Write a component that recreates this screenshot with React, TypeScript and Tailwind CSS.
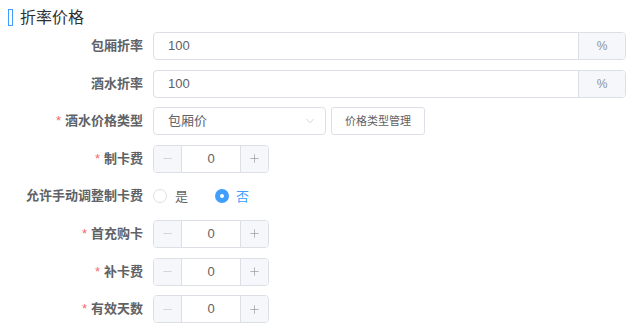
import { ChevronDown, Minus, Plus } from 'lucide-react';

const font = 'font-["Liberation_Sans","Noto_Sans_CJK_SC",sans-serif]';

const Label = ({ text, required }: { text: string; required?: boolean }) => (
    <div className="w-[143px] shrink-0 text-right text-[13px] font-bold text-[#606266] leading-[28px]">
        {required && <span className="text-[#f56c6c] mr-[4px] font-normal">*</span>}
        {text}
    </div>
);

const NumberInput = ({ value }: { value: string }) => (
    <div className="flex h-[28px] w-[116px] rounded-[4px] border border-[#dcdfe6] bg-white overflow-hidden">
        <div className="w-[28px] flex items-center justify-center bg-[#f5f7fa] border-r border-[#dcdfe6] text-[#c0c4cc]">
            <Minus className="h-[13px] w-[13px]" strokeWidth={1.2} />
        </div>
        <div className="flex-1 flex items-center justify-center text-[13px] text-[#606266]">{value}</div>
        <div className="w-[28px] flex items-center justify-center bg-[#f5f7fa] border-l border-[#dcdfe6] text-[#909399]">
            <Plus className="h-[13px] w-[13px]" strokeWidth={1.2} />
        </div>
    </div>
);

const PercentInput = ({ value }: { value: string }) => (
    <div className="flex h-[28px] flex-1 rounded-[4px] border border-[#dcdfe6] bg-white overflow-hidden">
        <div className="flex-1 flex items-center pl-[14px] text-[13px] text-[#606266]">{value}</div>
        <div className="w-[47px] flex items-center justify-center bg-[#f5f7fa] border-l border-[#dcdfe6] text-[12px] text-[#909399]">%</div>
    </div>
);

const App = () => {
    return (
        <div className={`${font} w-[640px] h-[332px] bg-white`}>
            <div className="flex items-center pt-[9px] pl-[8px]">
                <div className="w-[5px] h-[17px] border border-[#409eff]" />
                <span className="ml-[7px] text-[16px] leading-[17px] text-[#303133]">折率价格</span>
            </div>

            <div className="mt-[6px] flex flex-col gap-[9.6px] pr-[14px]">
                <div className="flex items-center">
                    <Label text="包厢折率" />
                    <div className="ml-[10px] flex flex-1">
                        <PercentInput value="100" />
                    </div>
                </div>
                <div className="flex items-center">
                    <Label text="酒水折率" />
                    <div className="ml-[10px] flex flex-1">
                        <PercentInput value="100" />
                    </div>
                </div>
                <div className="flex items-center">
                    <Label text="酒水价格类型" required />
                    <div className="ml-[10px] flex items-center gap-[5px]">
                        <div className="flex items-center justify-between h-[28px] w-[173px] rounded-[4px] border border-[#dcdfe6] pl-[14px] pr-[8px] text-[13px] text-[#606266]">
                            <span>包厢价</span>
                            <ChevronDown className="h-[14px] w-[14px] text-[#c0c4cc]" strokeWidth={1.2} />
                        </div>
                        <button className="h-[28px] w-[94px] rounded-[3px] border border-[#dcdfe6] bg-white text-[11px] text-[#606266]">
                            价格类型管理
                        </button>
                    </div>
                </div>
                <div className="flex items-center">
                    <Label text="制卡费" required />
                    <div className="ml-[10px]">
                        <NumberInput value="0" />
                    </div>
                </div>
                <div className="flex items-center">
                    <Label text="允许手动调整制卡费" />
                    <div className="ml-[10px] flex items-center h-[28px] text-[13px]">
                        <span className="w-[14px] h-[14px] rounded-full border border-[#dcdfe6] bg-white" />
                        <span className="ml-[8px] text-[#606266]">是</span>
                        <span className="ml-[27px] w-[14px] h-[14px] rounded-full bg-[#409eff] flex items-center justify-center">
                            <span className="w-[4px] h-[4px] rounded-full bg-white" />
                        </span>
                        <span className="ml-[7px] text-[#409eff]">否</span>
                    </div>
                </div>
                <div className="flex items-center">
                    <Label text="首充购卡" required />
                    <div className="ml-[10px]">
                        <NumberInput value="0" />
                    </div>
                </div>
                <div className="flex items-center">
                    <Label text="补卡费" required />
                    <div className="ml-[10px]">
                        <NumberInput value="0" />
                    </div>
                </div>
                <div className="flex items-center">
                    <Label text="有效天数" required />
                    <div className="ml-[10px]">
                        <NumberInput value="0" />
                    </div>
                </div>
            </div>
        </div>
    );
};

export default App;
